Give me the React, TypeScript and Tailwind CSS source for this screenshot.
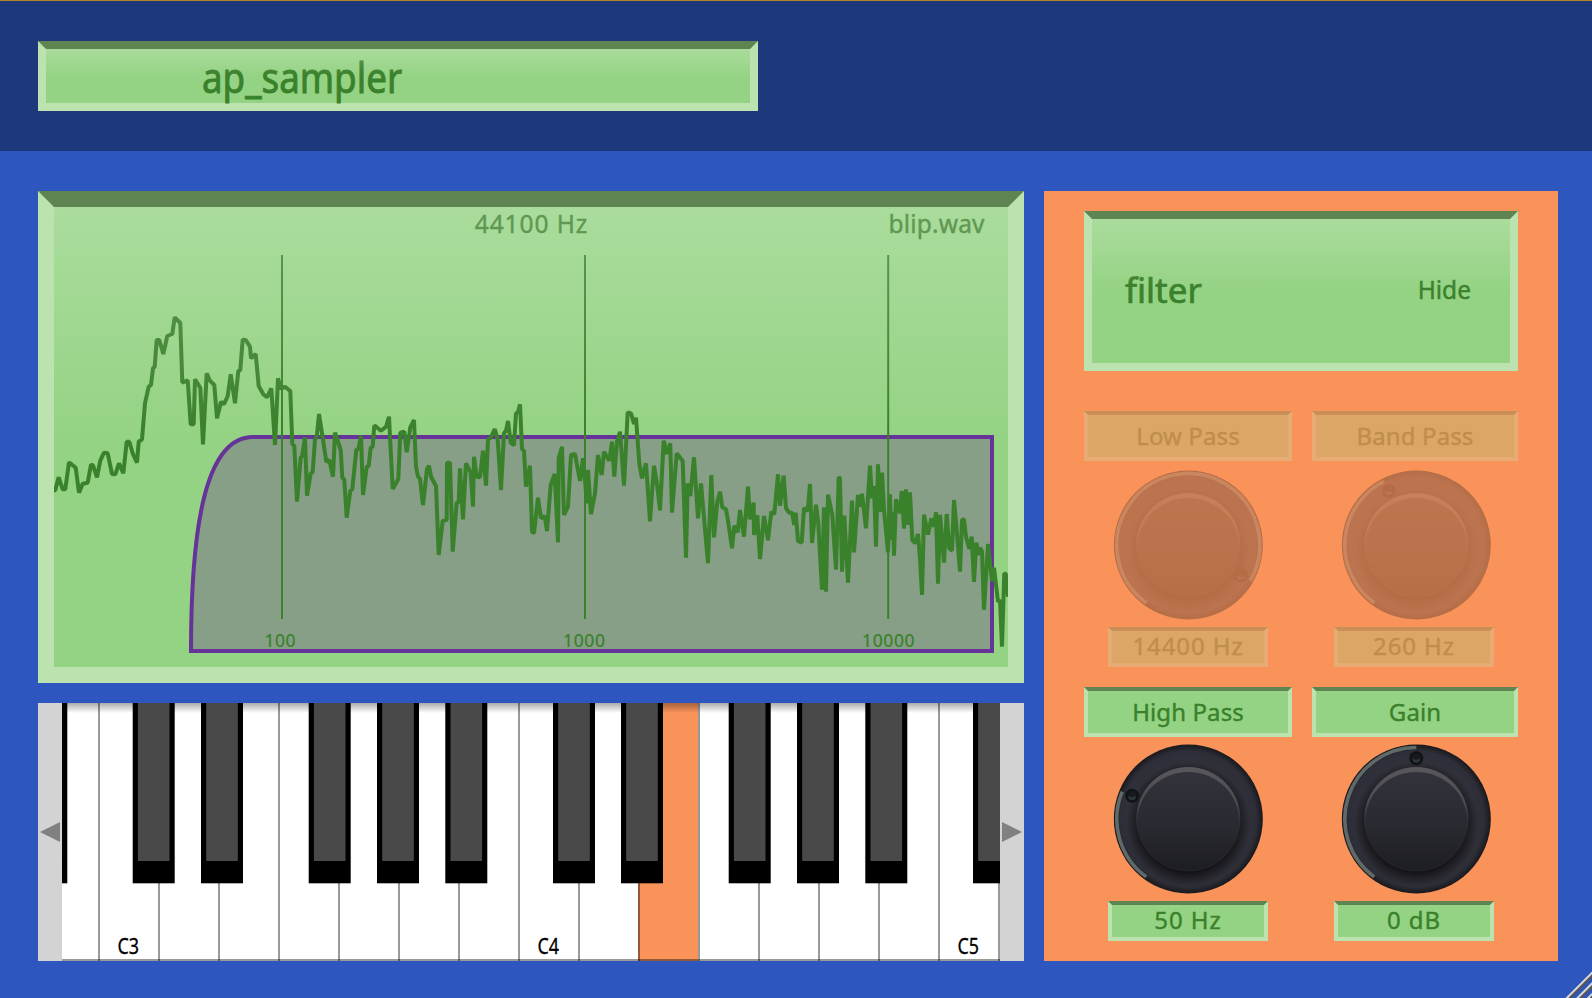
import React from "react";

type Segment = { x: number; y: number; points: string };

/* Spectrum samples, stored in thirds of a pixel relative to each segment's origin. */
const SEGMENTS: Segment[] = [
  {
    x: 30,
    y: 290,
    points:
      "70,603 76,600 86,562 98,598 106,598 117,517 137,533 147,608 158,581 173,578 183,524 189,526 201,562 211,512 222,488 233,490 246,552 256,553 267,520 280,550 290,455 298,455 308,490 321,518 326,455 336,448 345,340 356,290 363,285 369,235 374,230 380,150 388,150 400,192 412,138 427,132 434,82 451,99 457,278 473,271 482,403 491,403 495,268 511,293 519,463 530,250 540,272 553,285 561,385 573,335 582,343 593,318 602,253 615,340 625,243 631,240 638,149 647,150 660,170 663,205 677,192 686,288 700,313 711,322 724,295 735,465 744,265 753,297 765,290 781,303 787,462 793,467 801,635 812,502 816,500 825,442 831,617 842,550 848,547 855,447 860,443 867,372 878,443 889,515 898,510 909,560 915,428 932,480 937,563 943,568 950,683 961,602",
  },
  {
    x: 350,
    y: 380,
    points:
      "7,328 19,210 26,205 33,167 39,345 50,260 56,258 62,203 68,200 73,136 93,152 108,140 117,110 128,327 145,297 151,158 163,155 170,217 181,142 192,120 198,260 204,290 210,296 219,375 231,267 237,257 243,290 258,318 266,525 278,422 290,420 291,248 300,248 308,515 320,368 326,366 330,265 339,418 348,250 362,278 369,380 372,230 380,290 390,292 399,212 408,317 414,178 423,172 434,147 443,178 453,330 462,160 468,152 474,123 482,188 492,196 498,100 504,97 510,73 516,207 522,212 528,320 540,257 546,455 552,460 564,353 573,415 584,408 591,453 602,315 614,282 624,487 626,235 636,200 642,405 654,380 663,225 675,222 690,303 699,235 711,370 714,270 723,402 735,340 744,225 755,285 762,215 778,242 786,185 793,290 801,185 810,155 822,317 833,97 843,100 852,132 858,113 868,250 876,295 888,250 900,424 912,257 922,318 930,391 941,182 951,222",
  },
  {
    x: 670,
    y: 380,
    points:
      "1,190 6,398 20,220 38,243 48,533 53,310 61,348 72,232 84,415 93,310 114,550 124,285 132,472 142,365 150,335 157,382 168,388 174,422 186,505 193,437 203,457 210,390 222,470 234,320 240,418 251,368 252,465 262,405 270,537 282,408 294,481 304,395 313,403 324,283 330,377 341,287 348,385 358,398 366,398 373,435 377,398 384,483 395,488 402,384 413,393 420,312 426,489 438,374 445,430 456,629 462,382 468,635 474,344 487,405 498,569 506,291 510,296 516,575 523,407 534,608 546,362 552,517 564,345 570,380 576,341 588,445 600,257 606,355 612,318 618,500 624,253 630,396 636,278 642,390 654,517 660,343 664,480 670,395 672,527 678,358 690,400 695,333 702,446 708,328 714,435 720,337 727,480 735,490 744,462 750,537 756,645 762,404 774,464 784,415 792,440 798,397 804,611 810,404 822,548 830,402 838,505 846,512 852,360 858,425 870,575 876,420 882,418 888,470 898,507 905,470 912,606 919,488 927,525 930,503 936,515 942,689 954,492 966,604 972,563 984,665 990,660 996,800 1003,580 1008,583 1014,650",
  },
];

const SPECTRUM = SEGMENTS.flatMap((s) =>
  s.points.split(" ").map((p) => {
    const [u, v] = p.split(",").map(Number);
    return `${(s.x + u / 3).toFixed(1)},${(s.y + v / 3).toFixed(1)}`;
  })
).join(" ");

const BEVEL = "border-[#bce3af] border-t-[#5d8451] bg-[#95d384] text-[#3a812b]";

function Gloss() {
  return <div className="pointer-events-none absolute inset-0 bg-linear-to-b from-white/20 to-transparent to-50%" />;
}

function Spectrum() {
  return (
    <section className={`relative h-[492px] border-16 ${BEVEL}`}>
      <svg className="block h-full w-full" viewBox="54 207 954 460" fontFamily="'Noto Sans', sans-serif" fill="#3a812b">
        <text x="531" y="233" fontSize="24.5" textAnchor="middle" textLength="112.5" stroke="#3a812b" strokeWidth="0.4">44100 Hz</text>
        <text x="888.5" y="233" fontSize="24.5" textLength="96" stroke="#3a812b" strokeWidth="0.4">blip.wav</text>
        <path
          d="M191 651 C191 520 207 437 253 437 H992 V651 Z"
          fill="#66338c"
          fillOpacity="0.32"
          stroke="#663399"
          strokeWidth="4"
        />
        <path d="M282 255V619M585 255V619M888.2 255V619" stroke="#3a812b" strokeWidth="2" />
        <g fontSize="17.5" textAnchor="middle" letterSpacing="0.6" stroke="#3a812b" strokeWidth="0.2">
          <text x="280.3" y="647">100</text>
          <text x="584.3" y="647">1000</text>
          <text x="888.6" y="647">10000</text>
        </g>
        <polyline points={SPECTRUM} fill="none" stroke="#3a812b" strokeWidth="4" strokeLinejoin="bevel" />
      </svg>
      <Gloss />
    </section>
  );
}

const WHITE_KEYS = Array.from({ length: 17 }, (_, i) => -26 + i * 60 + 2);
const BLACK_KEYS = [-36.7, 70.7, 139, 246.7, 315, 383.3, 491, 559, 666.7, 735, 803.3, 911];

function Keyboard() {
  return (
    <section className="flex h-[258px]">
      <button className="flex w-6 items-center bg-[#d3d3d3] pl-[2px]">
        <svg width="20" height="20"><path d="M0 10 20 0V20Z" fill="#808080" /></svg>
      </button>
      <svg className="block h-[258px] w-[938px] bg-white" viewBox="0 0 938 258">
        <defs>
          <linearGradient id="fall" x1="0" y1="0" x2="0" y2="1">
            <stop offset="0" stopOpacity="0.33" />
            <stop offset="1" stopOpacity="0" />
          </linearGradient>
        </defs>
        <rect x="576" width="60" height="258" fill="#fa935a" />
        <rect y="0" width="938" height="10" fill="url(#fall)" />
        <g fillOpacity="0.4">
          {WHITE_KEYS.map((x) => (
            <rect key={x} x={x} width="2" height="258" />
          ))}
          <rect y="256" width="938" height="2" />
        </g>
        {BLACK_KEYS.map((x) => (
          <g key={x}>
            <rect x={x} width="42" height="180.3" />
            <rect x={x + 5.2} width="31.6" height="158" fill="#494949" />
          </g>
        ))}
        <g fontFamily="'Noto Sans', sans-serif" fontSize="22.5" stroke="#000" strokeWidth="0.3">
          <text x="55.5" y="250.5" textLength="21.5" lengthAdjust="spacingAndGlyphs">C3</text>
          <text x="475.5" y="250.5" textLength="21.5" lengthAdjust="spacingAndGlyphs">C4</text>
          <text x="895.5" y="250.5" textLength="21.5" lengthAdjust="spacingAndGlyphs">C5</text>
        </g>
      </svg>
      <button className="flex w-6 items-center bg-[#d3d3d3] pl-[2px]">
        <svg width="20" height="20"><path d="M20 10 0 0V20Z" fill="#808080" /></svg>
      </button>
    </section>
  );
}

function polar(angle: number, r: number) {
  const a = (angle * Math.PI) / 180;
  return [75 + r * Math.sin(a), 75 - r * Math.cos(a)];
}

function Knob({ angle, id }: { angle: number; id: string }) {
  const [sx, sy] = polar(-144, 71.5);
  const [ex, ey] = polar(angle, 71.5);
  const [dx, dy] = polar(angle, 60.8);
  const large = angle + 144 > 180 ? 1 : 0;
  return (
    <svg width="150" height="150" viewBox="0 0 150 150">
      <defs>
        <radialGradient id={`${id}-rim`}>
          <stop offset="0.8" stopColor="#30303a" />
          <stop offset="0.91" stopColor="#2e2e38" />
          <stop offset="1" stopColor="#18181c" />
        </radialGradient>
        <linearGradient id={`${id}-cap`} x1="0" y1="0" x2="0" y2="1">
          <stop offset="0" stopColor="#33333c" />
          <stop offset="0.55" stopColor="#2a2a32" />
          <stop offset="1" stopColor="#1d1e22" />
        </linearGradient>
        <linearGradient id={`${id}-edge`} x1="0" y1="0" x2="0" y2="1">
          <stop offset="0" stopColor="#57575c" />
          <stop offset="0.35" stopColor="#4a4a50" />
          <stop offset="0.65" stopColor="#303036" stopOpacity="0" />
        </linearGradient>
        <radialGradient id={`${id}-shade`}>
          <stop offset="0.78" stopColor="#131316" stopOpacity="0.95" />
          <stop offset="1" stopColor="#131316" stopOpacity="0" />
        </radialGradient>
      </defs>
      <circle cx="75" cy="75" r="74.5" fill={`url(#${id}-rim)`} />
      <circle cx="75" cy="80" r="62" fill={`url(#${id}-shade)`} />
      <path d={`M${sx} ${sy}A71.5 71.5 0 ${large} 1 ${ex} ${ey}`} fill="none" stroke="#5f6968" strokeWidth="3.6" />
      <circle cx="75" cy="75" r="52.3" fill="#26262d" />
      <circle cx="75" cy="75" r="51.5" fill={`url(#${id}-cap)`} />
      <path
        d="M23 75A52 52 0 0 1 127 75A52 52 0 0 1 23 75ZM24.2 76.8A50.8 50.8 0 0 0 125.8 76.8A50.8 48.8 0 0 0 24.2 76.8Z"
        fill={`url(#${id}-edge)`}
        fillRule="evenodd"
      />
      <circle cx={dx} cy={dy} r="7" fill="#121317" />
      <circle cx={dx} cy={dy} r="4.5" fill="#17191c" />
      <path d={`M${dx - 4} ${dy}a4 4.2 0 0 0 8 0q-4 3-8 0`} fill="#2c383b" />
    </svg>
  );
}

type ControlProps = { label: string; value: string; angle: number; id: string; disabled?: boolean; wide?: boolean };

function Control({ label, value, angle, id, disabled, wide }: ControlProps) {
  return (
    <div className={`flex flex-col items-center ${disabled ? "opacity-30" : ""}`}>
      <button className={`flex h-[50px] w-full items-center justify-center border-4 text-2xl/6 ${BEVEL}`}>
        <span className="tracking-[0.1px]">{label}</span>
      </button>
      <div className={`mb-[7px] h-[150px] ${disabled ? "mt-[9px]" : "mt-[7px]"} ${wide ? "translate-x-[0.3px]" : "translate-x-[1.3px]"}`}>
        <Knob angle={angle} id={id} />
      </div>
      <div
        className={`flex h-10 w-40 items-center justify-center border-4 pb-[2px] text-2xl/6 tracking-[0.9px] ${wide ? "" : "-translate-x-px"} ${BEVEL}`}
      >
        {value}
      </div>
    </div>
  );
}

function FilterPanel() {
  return (
    <aside className="h-[770px] w-[514px] bg-[#fa935a] px-10 pt-5">
      <div className={`relative flex h-40 w-[434px] items-center justify-between border-8 pr-[39px] pb-[2px] pl-[33px] ${BEVEL}`}>
        <span className="text-[35px]/[44px] [-webkit-text-stroke:0.7px_#3a812b]">filter</span>
        <span className="text-[24.5px]/[32px]">Hide</span>
        <Gloss />
      </div>
      <div className="mt-10 grid grid-cols-[208px_206px] gap-x-5 gap-y-5">
        <Control id="low" label="Low Pass" value="14400 Hz" angle={120} disabled wide />
        <Control id="band" label="Band Pass" value="260 Hz" angle={-27} disabled />
        <Control id="high" label="High Pass" value="50 Hz" angle={-67.5} wide />
        <Control id="gain" label="Gain" value="0 dB" angle={0} />
      </div>
    </aside>
  );
}

export default function App() {
  return (
    <div className="relative h-[998px] w-[1592px] overflow-hidden bg-[#2e56bf] font-['Noto_Sans',sans-serif] [-webkit-text-stroke:0.4px_#3a812b]">
      <header className="h-[151px] border-t border-[#b3842a] bg-[#1e387c] px-[38px] pt-10">
        <div className={`relative flex h-[70px] w-[720px] items-center border-8 pt-[2px] pl-[156px] ${BEVEL}`}>
          <h1 className="origin-left scale-x-[0.875] text-[42px]/[54px] [-webkit-text-stroke:0.9px_#3a812b]">ap_sampler</h1>
          <Gloss />
        </div>
      </header>
      <main className="flex gap-5 px-[38px] pt-10">
        <div className="flex w-[986px] flex-col gap-5 [-webkit-text-stroke:0]">
          <Spectrum />
          <Keyboard />
        </div>
        <FilterPanel />
      </main>
      <svg className="absolute right-0 bottom-0" width="32" height="32" strokeWidth="2">
        <path d="M8.3 33 33 8.3M19 33 33 19M29.6 33 33 29.6" stroke="#555" strokeWidth="3" />
        <path d="M5.8 33 33 5.8M16.5 33 33 16.5M27.1 33 33 27.1" stroke="#d8d8d8" />
      </svg>
    </div>
  );
}
